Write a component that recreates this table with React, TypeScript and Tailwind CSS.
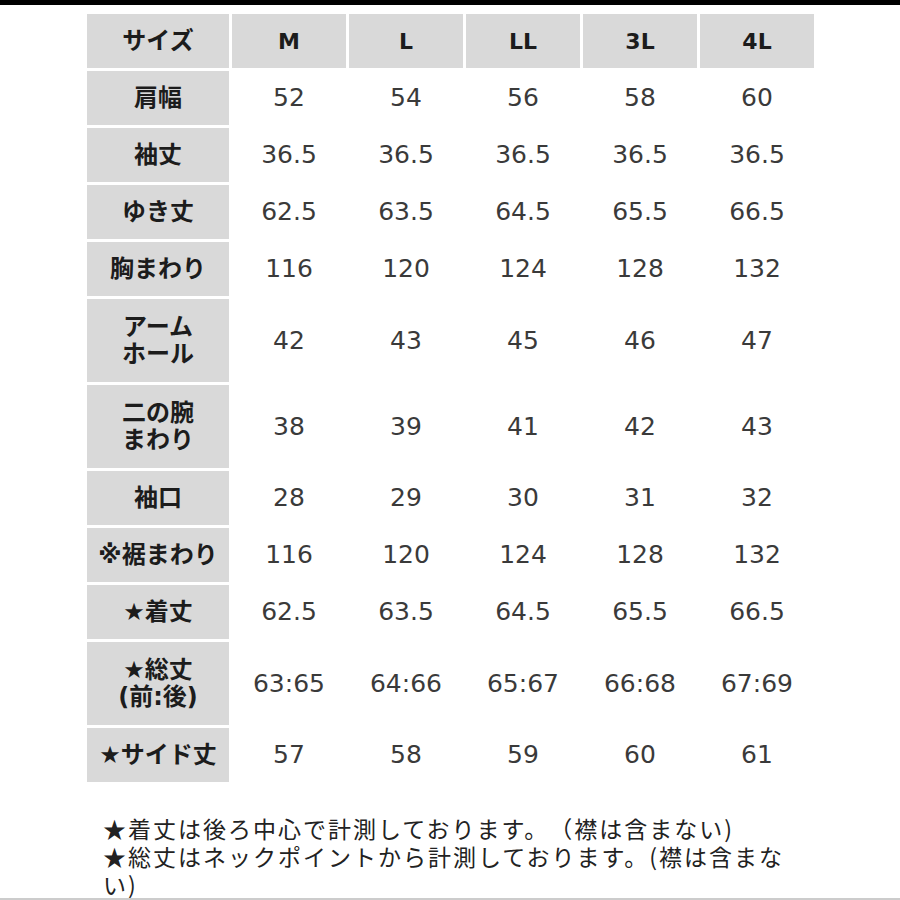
const SIZES = ["M", "L", "LL", "3L", "4L"] as const;

const ROWS: { label: string[]; values: string[]; tall?: boolean }[] = [
  { label: ["肩幅"], values: ["52", "54", "56", "58", "60"] },
  { label: ["袖丈"], values: ["36.5", "36.5", "36.5", "36.5", "36.5"] },
  { label: ["ゆき丈"], values: ["62.5", "63.5", "64.5", "65.5", "66.5"] },
  { label: ["胸まわり"], values: ["116", "120", "124", "128", "132"] },
  { label: ["アーム", "ホール"], values: ["42", "43", "45", "46", "47"], tall: true },
  { label: ["二の腕", "まわり"], values: ["38", "39", "41", "42", "43"], tall: true },
  { label: ["袖口"], values: ["28", "29", "30", "31", "32"] },
  { label: ["※裾まわり"], values: ["116", "120", "124", "128", "132"] },
  { label: ["★着丈"], values: ["62.5", "63.5", "64.5", "65.5", "66.5"] },
  { label: ["★総丈", "(前:後)"], values: ["63:65", "64:66", "65:67", "66:68", "67:69"], tall: true },
  { label: ["★サイド丈"], values: ["57", "58", "59", "60", "61"] },
];

const JP = "font-['DejaVu_Sans','Noto_Sans_CJK_JP',sans-serif]";

export default function App() {
  return (
    <div className="flex h-[900px] w-[900px] flex-col overflow-hidden border-b-2 border-[#cccccc] bg-white">
      <div className="h-[5px] w-full bg-black" />

      <div className={`ml-[87px] mt-[9px] grid w-[727px] grid-cols-[142px_repeat(5,114px)] gap-[3px] ${JP}`}>
        <div className="flex h-[54px] items-center justify-center bg-[#d9d9d9] text-[24px] font-bold text-[#1c1c1c]">
          サイズ
        </div>
        {SIZES.map((s) => (
          <div
            key={s}
            className="flex h-[54px] items-center justify-center bg-[#d9d9d9] text-[22px] font-bold text-[#1c1c1c]"
          >
            {s}
          </div>
        ))}

        {ROWS.map((row) => (
          <div key={row.label.join("")} className="contents">
            <div
              className={`flex flex-col items-center justify-center bg-[#d9d9d9] text-[24px] font-bold leading-[27px] text-[#1c1c1c] ${
                row.tall ? "h-[83px]" : "h-[54px]"
              }`}
            >
              {row.label.map((l) => (
                <span key={l} className="whitespace-nowrap">
                  {l}
                </span>
              ))}
            </div>
            {row.values.map((v, i) => (
              <div
                key={i}
                className="flex items-center justify-center font-['DejaVu_Sans',sans-serif] text-[25px] text-[#3a3a3a]"
              >
                {v}
              </div>
            ))}
          </div>
        ))}
      </div>

      <div className="ml-[103px] mt-[32px] w-[695px] font-['Noto_Sans_CJK_JP',sans-serif] text-[23px] leading-[28px] tracking-[2px] text-[#222222] [text-spacing-trim:space-all]">
        <p>★着丈は後ろ中心で計測しております。（襟は含まない)</p>
        <p>★総丈はネックポイントから計測しております。(襟は含まない)</p>
      </div>
    </div>
  );
}
